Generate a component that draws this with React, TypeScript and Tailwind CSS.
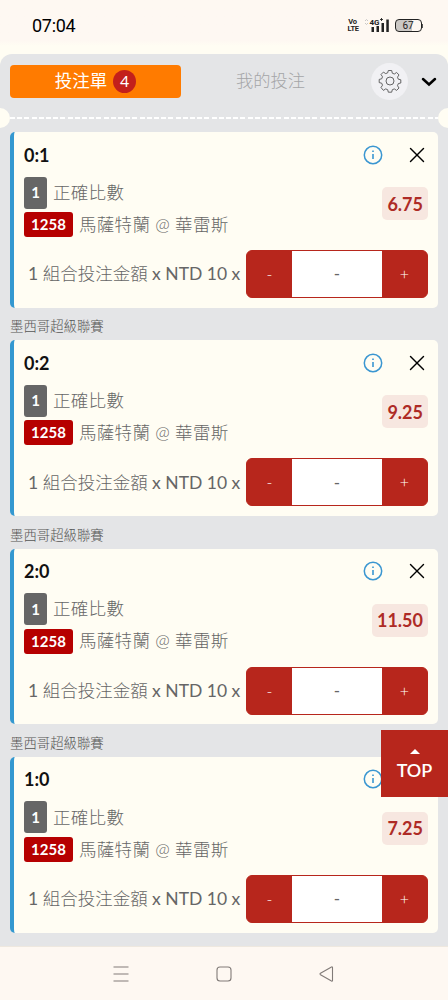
import { FiX } from "react-icons/fi";

const bets = [
  { score: "0:1", odds: "6.75" },
  { score: "0:2", odds: "9.25" },
  { score: "2:0", odds: "11.50" },
  { score: "1:0", odds: "7.25" },
];

function StatusBar() {
  return (
    <div className="flex h-[54px] shrink-0 items-start justify-between bg-gradient-to-b from-[#fef8f2] from-75% to-[#fffdf3] to-85% pl-[32px] pr-[25px] pt-[16px]">
      <span className="font-['Roboto','Noto_Sans',sans-serif] text-[18px] leading-[20px] tracking-[-0.3px] text-black">
        07:04
      </span>
      <div className="mt-[2px] flex items-start font-['Roboto',sans-serif] text-[#222]">
        <div className="w-[10px] text-center text-[7.5px] font-bold leading-[7px] tracking-[-0.3px]">
          <div>Vo</div>
          <div>LTE</div>
        </div>
        <svg width="26" height="16" viewBox="0 0 26 16" className="ml-[5px]">
          <path d="M2 3l1.500-1.500L5 3M2 5l1.500 1.500L5 5" fill="none" stroke="#bbb" strokeWidth="0.800" />
          <text x="6.500" y="6.800" fontSize="8" fontWeight="700" fill="#222">
            4G
          </text>
          <path d="M17 1.500h3M18.500 0v3" stroke="#222" strokeWidth="0.900" />
          <path
            d="M8.500 9h2.500v5h-2.500zM13.500 8h2.500v6h-2.500zM18.500 5h2.500v9h-2.500zM23.300 1.500h2.500v12.500h-2.500z"
            fill="#222"
          />
        </svg>
        <div className="ml-[6px] mt-[1px] flex items-center">
          <div className="flex h-[13px] w-[27px] items-center justify-center rounded-[4px] border border-[#222] bg-gradient-to-r from-[#cbc8c5] from-65% to-[#fef8f2] to-65% text-[10px] leading-none">
            67
          </div>
          <div className="h-[4px] w-[1.500px] bg-[#555]" />
        </div>
      </div>
    </div>
  );
}

function GearIcon() {
  return (
    <svg
      width="24"
      height="24"
      viewBox="0 0 24 24"
      fill="none"
      stroke="#555"
      strokeWidth="0.900"
      strokeLinejoin="round"
    >
      <path d="M10.300 1.500h3.400l.6 2.700 2 .8 2.300-1.500 2.400 2.400-1.500 2.300.8 2 2.500.6v3.200l-2.500.6-.8 2.100 1.500 2.300-2.400 2.400-2.300-1.500-2 .8-.6 2.500h-3.400l-.6-2.500-2-.8-2.300 1.500L3 18.500l1.500-2.300-.8-2-2.500-.6v-3.200l2.500-.6.8-2L3 5.500l2.400-2.400 2.300 1.500 2-.8z" />
      <circle cx="12" cy="12" r="4" />
    </svg>
  );
}

function SlipHeader() {
  return (
    <div className="flex h-[54px] shrink-0 items-center pl-[10px]">
      <div className="flex h-[33px] w-[171px] items-center justify-center gap-[6px] rounded-[4px] bg-[#ff7b00] text-[17.500px] text-white">
        <span className="leading-none">投注單</span>
        <span className="flex h-[23px] w-[23px] items-center justify-center rounded-full bg-[#c3201b] text-[16px] leading-none">
          4
        </span>
      </div>
      <div className="w-[179px] text-center text-[17.300px] font-light leading-none text-[#a5a5a7]">
        我的投注
      </div>
      <div className="ml-[11px] flex h-[37px] w-[37px] items-center justify-center rounded-full bg-[#f1f1f4]">
        <GearIcon />
      </div>
      <svg width="16" height="10" viewBox="0 0 16 10" className="ml-[13px] mt-[1px]">
        <path d="M2 2l6 5.500L14 2" fill="none" stroke="#000" strokeWidth="2.500" strokeLinecap="round" />
      </svg>
    </div>
  );
}

// perforated edge between the header and the slips
function TicketEdge() {
  return (
    <div className="flex h-[24px] shrink-0 items-start justify-between overflow-hidden">
      <div className="h-[20px] w-[10px] shrink-0 rounded-r-full bg-[#fffdf3]" />
      <div className="mt-[9px] h-[2px] flex-1 bg-[repeating-linear-gradient(90deg,#ffffff_0px,#ffffff_5px,transparent_5px,transparent_7.200px)]" />
      <div className="h-[20px] w-[10px] shrink-0 rounded-l-full bg-[#fffdf3]" />
    </div>
  );
}

function BetCard({ score, odds }: { score: string; odds: string }) {
  return (
    <div className="h-[175.700px] rounded-[5px] border-l-4 border-[#3498d0] bg-[#fffdf3] pl-[10px] pr-[10px] text-[17.500px] text-[#666]">
      <div className="flex h-[45px] items-center">
        <span className="flex-1 text-[18px] font-bold leading-none text-[#111]">{score}</span>
        <svg width="20" height="20" viewBox="0 0 20 20" fill="none" stroke="#3a96d1" className="mr-[21px]">
          <circle cx="10" cy="10" r="8.700" strokeWidth="1.500" />
          <path d="M10 9v5M10 5.500v1.500" strokeWidth="1.600" />
        </svg>
        <FiX size={26} strokeWidth={1.3} className="-mr-[2px] text-black" />
      </div>

      <div className="flex h-[60px] justify-between">
        <div>
          <div className="flex h-[31px] items-center">
            <span className="flex h-[32px] w-[23px] items-center justify-center rounded-[3px] bg-[#666] text-[15px] font-bold leading-none text-white">
              1
            </span>
            <span className="ml-[6px] font-light leading-none tracking-[0.300px]">正確比數</span>
          </div>
          <div className="mt-[4px] flex h-[25px] items-center">
            <span className="flex h-[25px] w-[49px] items-center justify-center rounded-[3px] bg-[#b60000] text-[15px] font-bold leading-none text-white">
              1258
            </span>
            <span className="ml-[6px] whitespace-nowrap font-light leading-none tracking-[0.300px]">
              馬薩特蘭 @ 華雷斯
            </span>
          </div>
        </div>
        <div className="mt-[10px] flex h-[33px] items-center rounded-[5px] bg-[#f7e7e0] px-[5px] text-[18px] font-bold leading-none text-[#ae2b26]">
          {odds}
        </div>
      </div>

      <div className="mt-[13px] flex h-[48px] items-center justify-between">
        <span className="whitespace-nowrap pl-[4px] font-light leading-none">
          <span className="font-normal">1 </span>組合投注金額<span className="font-normal"> x NTD 10 x</span>
        </span>
        <div className="flex h-[48px] w-[182px] overflow-hidden rounded-[6px] border border-[#b7261c] bg-[#b7261c] text-white">
          <button className="w-[45px] text-[16px] font-light">-</button>
          <div className="flex flex-1 items-center justify-center bg-white text-[17px] text-[#666]">-</div>
          <button className="w-[45px] text-[16px] font-light">+</button>
        </div>
      </div>
    </div>
  );
}

function NavBar() {
  return (
    <div className="flex h-[54px] shrink-0 items-center justify-between border-t border-[#eee8df] bg-[#fef8f2] px-[112px]">
      <svg width="18" height="18" viewBox="0 0 18 18" stroke="#817b78" strokeWidth="1.100">
        <path d="M1.500 2h15M1.500 9h15M1.500 16h15" />
      </svg>
      <svg width="18" height="18" viewBox="0 0 18 18" fill="none" stroke="#817b78" strokeWidth="1.100">
        <rect x="2" y="2" width="14" height="14" rx="3" />
      </svg>
      <svg width="18" height="18" viewBox="0 0 18 18" fill="none" stroke="#817b78" strokeWidth="1.100">
        <path d="M14.500 2.500v13q0 1-1 .500L2.500 9.700q-1-.7 0-1.400L13.500 2q1-.5 1 .5z" />
      </svg>
    </div>
  );
}

export default function App() {
  return (
    <div className="relative flex h-[1000px] w-[448px] flex-col overflow-hidden bg-[#fffdf3] font-['Lato','Noto_Sans_CJK_TC',sans-serif]">
      <StatusBar />
      <div className="flex h-[892px] shrink-0 flex-col rounded-t-[12px] bg-[#e4e5e7]">
        <SlipHeader />
        <TicketEdge />
        <div className="px-[10px]">
          {bets.map((bet, index) => (
            <div key={bet.score}>
              {index > 0 && (
                <div className="flex h-[32.600px] items-center pt-[6px] text-[13.400px] font-light leading-none text-[#555]">
                  墨西哥超級聯賽
                </div>
              )}
              <BetCard score={bet.score} odds={bet.odds} />
            </div>
          ))}
        </div>
      </div>
      <NavBar />

      {/* Back to top */}
      <button className="absolute right-0 top-[730px] flex h-[67px] w-[67px] flex-col items-center bg-[#b7261c] pt-[19px] text-white">
        <span className="h-0 w-0 border-x-[5px] border-b-[5px] border-x-transparent border-b-white" />
        <span className="mt-[6px] text-[18px] font-semibold leading-[20px]">TOP</span>
      </button>
    </div>
  );
}
